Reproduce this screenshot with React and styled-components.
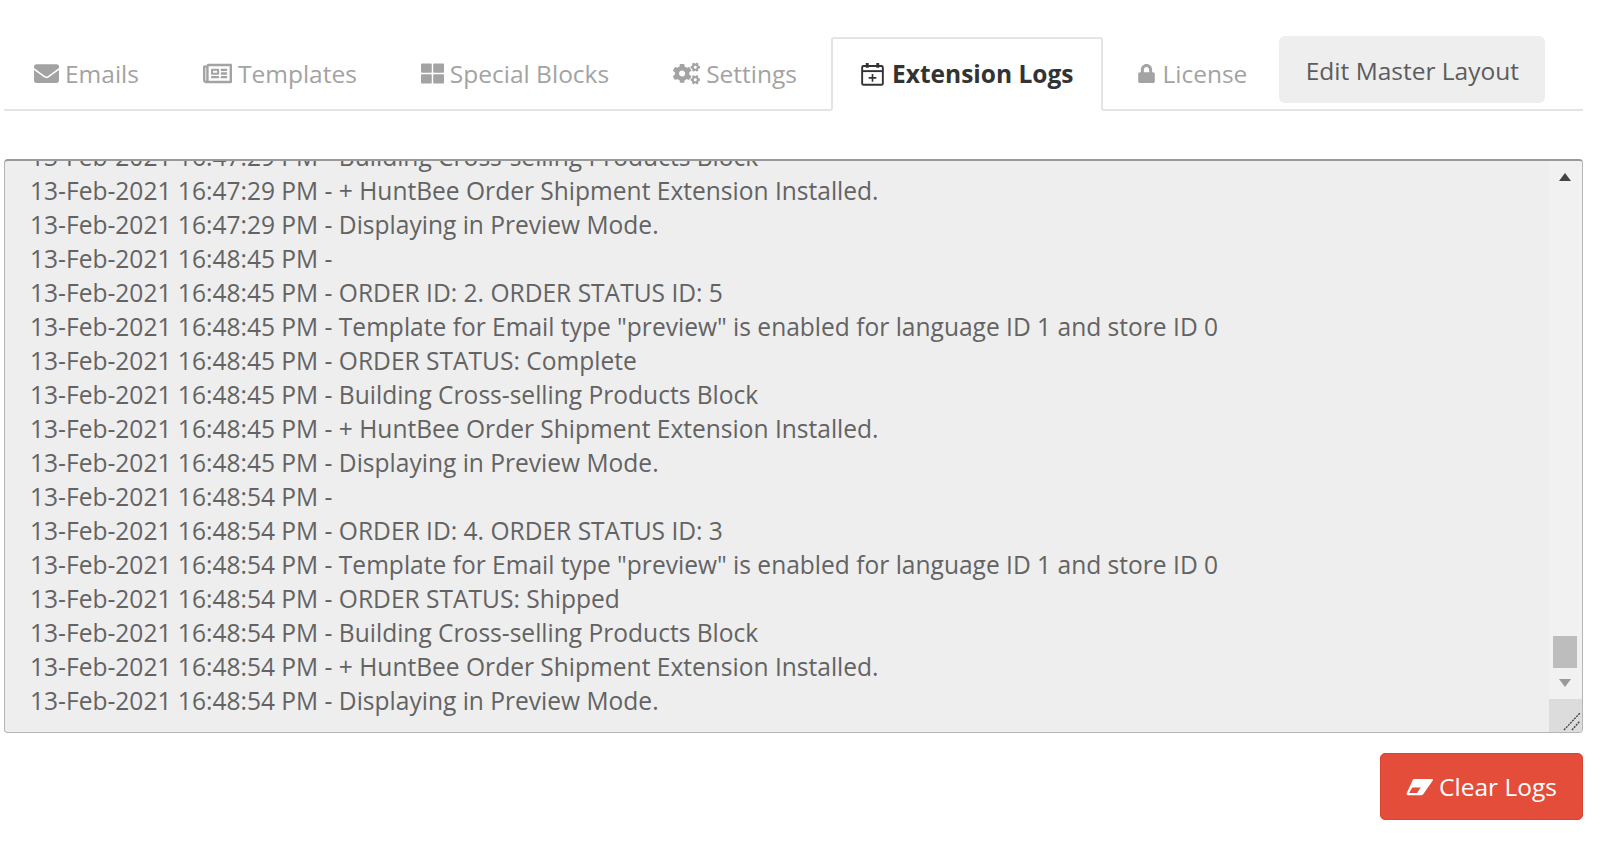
import React from "react";
import styled, { createGlobalStyle } from "styled-components";
import { FaEnvelope, FaRegNewspaper, FaThLarge, FaCogs, FaLock } from "react-icons/fa";

const Global = createGlobalStyle`
  html, body { margin: 0; padding: 0; background: #fff; }
  body { font-family: "Open Sans", "Noto Sans", sans-serif; width: 1600px; height: 856px; overflow: hidden; }
`;

const Page = styled.div`
  padding: 36px 17px 0 4px;
  display: flex;
  flex-direction: column;
`;

const TabBar = styled.nav`
  display: flex;
  align-items: flex-start;
  gap: 4px;
  height: 75px;
  border-bottom: 2px solid #e4e4e4;
  box-sizing: border-box;
  margin-bottom: 48px;
`;

const Tab = styled.a`
  display: flex;
  align-items: center;
  gap: ${(p) => (p.$active ? "8px" : "6px")};
  box-sizing: border-box;
  height: 74px;
  margin-top: 1px;
  padding: 0 28px ${(p) => (p.$active ? "1px" : "4px")};
  font-size: 24.5px;
  white-space: nowrap;
  color: ${(p) => (p.$active ? "#333" : "#a3a3a3")};
  font-weight: ${(p) => (p.$active ? 700 : 400)};
  background: ${(p) => (p.$active ? "#fff" : "transparent")};
  border: 2px solid ${(p) => (p.$active ? "#e4e4e4" : "transparent")};
  border-bottom: ${(p) => (p.$active ? "2px solid #fff" : "0")};
  border-radius: 3px 3px 0 0;
  svg { flex: none; }
`;

const MasterButton = styled.button`
  height: 67px;
  width: 266px;
  margin-left: -2px;
  padding: 2px 0 0;
  border: 0;
  border-radius: 6px;
  background: #eee;
  color: #5c5c5c;
  font: 400 24.5px "Open Sans", sans-serif;
  white-space: nowrap;
`;

const LogBox = styled.div`
  position: relative;
  display: flex;
  height: 574px;
  box-sizing: border-box;
  border: 1px solid #b5b5b5;
  border-top: 2px solid #999;
  border-radius: 4px;
  background: #eee;
  overflow: hidden;
`;

const LogBody = styled.div`
  flex: 1;
  overflow: hidden;
  padding-left: 25px;
`;

const LogLines = styled.div`
  margin-top: -21px;
`;

const LogLine = styled.div`
  height: 34px;
  line-height: 34px;
  font-size: 24.55px;
  color: #636363;
  white-space: nowrap;
`;

const Rail = styled.div`
  flex: none;
  width: 33px;
  display: flex;
  flex-direction: column;
  align-items: center;
  background: #f1f1f1;
  padding: 0 2px 33px 0;
  box-sizing: border-box;
`;

const Arrow = styled.div`
  width: 0;
  height: 0;
  border-left: 6px solid transparent;
  border-right: 6px solid transparent;
  border-bottom: ${(p) => (p.$up ? "8px solid #444" : "0")};
  border-top: ${(p) => (p.$up ? "0" : "8px solid #999")};
  margin-top: ${(p) => (p.$up ? "12px" : "11px")};
`;

const RailSpace = styled.div`
  flex: 1;
`;

const Thumb = styled.div`
  width: 24px;
  height: 32px;
  background: #bdbdbd;
`;

const RailEnd = styled.div`
  height: 12px;
`;

const Grip = styled.div`
  position: absolute;
  right: 0;
  bottom: 0;
  width: 33px;
  height: 33px;
  background: #dcdcdc;
  svg { display: block; width: 33px; height: 33px; }
`;

const Footer = styled.div`
  display: flex;
  justify-content: flex-end;
  margin-top: 20px;
`;

const ClearButton = styled.button`
  display: flex;
  align-items: center;
  justify-content: center;
  gap: 6px;
  width: 203px;
  height: 67px;
  padding: 0;
  border: 1px solid #d9432f;
  border-radius: 5px;
  background: #e54d3b;
  color: #fff;
  font: 400 24.5px "Open Sans", sans-serif;
  svg { width: 27px; height: 18px; }
`;

const CalendarIcon = ({ size }) => (
  <svg width={size} height={size + 1} viewBox="0 0 24 25" fill="none" stroke="#333">
    <rect x="1.2" y="4.2" width="21.6" height="19.6" rx="1.5" strokeWidth="2" />
    <path d="M1 9.5 H23" strokeWidth="2" />
    <path d="M6.5 1 V6 M17.5 1 V6" strokeWidth="3" />
    <path d="M12 12.5 V20.5 M8 16.5 H16" strokeWidth="1.7" />
  </svg>
);

const EraserIcon = () => (
  <svg viewBox="0 0 27 18">
    <path d="M8 1 H26 a1 1 0 0 1 .8 1.5 L17 16.5 a2 2 0 0 1 -1.6 .8 H2 a1.5 1.5 0 0 1 -1.2 -2.3 L7 1.6 Z" fill="#fff" />
    <path d="M6.3 9.5 H14.8 L11 15 H3 Z" fill="#e54d3b" />
  </svg>
);

const tabs = [
  { label: "Emails", Icon: FaEnvelope, size: 25 },
  { label: "Templates", Icon: FaRegNewspaper, size: 29 },
  { label: "Special Blocks", Icon: FaThLarge, size: 23 },
  { label: "Settings", Icon: FaCogs, size: 27 },
  { label: "Extension Logs", Icon: CalendarIcon, size: 23, active: true },
  { label: "License", Icon: FaLock, size: 19 },
];

const block = (stamp, id, status, name) => [
  `${stamp} - `,
  `${stamp} - ORDER ID: ${id}. ORDER STATUS ID: ${status}`,
  `${stamp} - Template for Email type "preview" is enabled for language ID 1 and store ID 0`,
  `${stamp} - ORDER STATUS: ${name}`,
  `${stamp} - Building Cross-selling Products Block`,
  `${stamp} - + HuntBee Order Shipment Extension Installed.`,
  `${stamp} - Displaying in Preview Mode.`,
];

const lines = [
  "13-Feb-2021 16:47:29 PM - Building Cross-selling Products Block",
  "13-Feb-2021 16:47:29 PM - + HuntBee Order Shipment Extension Installed.",
  "13-Feb-2021 16:47:29 PM - Displaying in Preview Mode.",
  ...block("13-Feb-2021 16:48:45 PM", 2, 5, "Complete"),
  ...block("13-Feb-2021 16:48:54 PM", 4, 3, "Shipped"),
];

export default function App() {
  return (
    <>
      <Global />
      <Page>
        <TabBar>
          {tabs.map(({ label, Icon, active, size }) => (
            <Tab key={label} $active={active}>
              <Icon size={size} />
              {label}
            </Tab>
          ))}
          <MasterButton>Edit Master Layout</MasterButton>
        </TabBar>
        <LogBox>
          <LogBody>
            <LogLines>
              {lines.map((line, i) => (
                <LogLine key={i}>{line}</LogLine>
              ))}
            </LogLines>
          </LogBody>
          <Rail>
            <Arrow $up />
            <RailSpace />
            <Thumb />
            <Arrow />
            <RailEnd />
          </Rail>
          <Grip>
            <svg viewBox="0 0 33 33">
              <path d="M15 31 L31 14 M23 31 L31 22" stroke="#444" strokeWidth="1.4" strokeDasharray="2 1" fill="none" />
            </svg>
          </Grip>
        </LogBox>
        <Footer>
          <ClearButton>
            <EraserIcon />
            Clear Logs
          </ClearButton>
        </Footer>
      </Page>
    </>
  );
}
